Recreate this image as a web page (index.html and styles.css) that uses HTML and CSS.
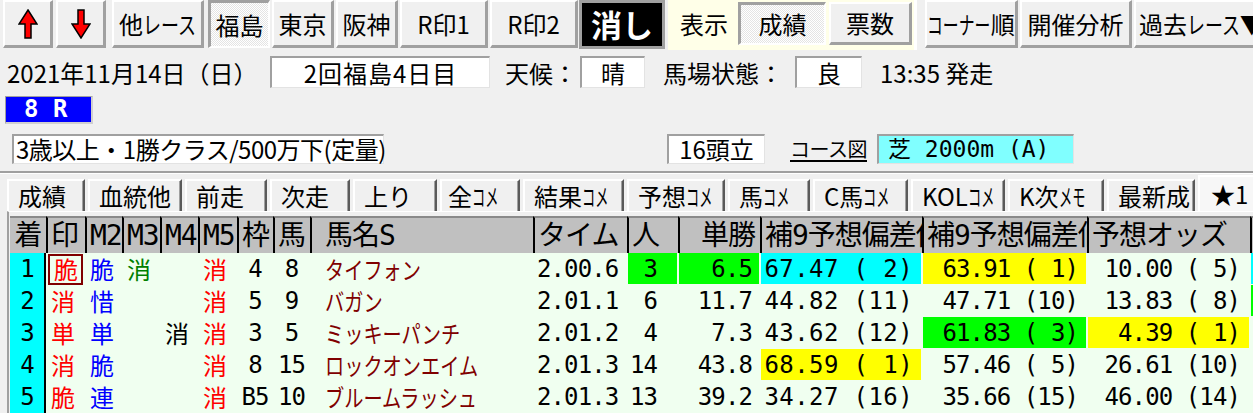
FILE: index.html
```html
<!DOCTYPE html>
<html lang="ja">
<head>
<meta charset="utf-8">
<title>レース成績</title>
<link rel="stylesheet" href="styles.css">
</head>
<body>
<div class="toolbar">
  <button class="btn btn-arrow" aria-label="前のレース">
    <svg width="20" height="30" viewBox="0 0 20 30"><polygon points="10,1 19,15 13,15 13,29 7,29 7,15 1,15" fill="#ff0000" stroke="#000" stroke-width="1.5" stroke-linejoin="miter"/></svg>
  </button>
  <button class="btn btn-arrow" aria-label="次のレース">
    <svg width="20" height="30" viewBox="0 0 20 30"><polygon points="7,1 13,1 13,15 19,15 10,29 1,15 7,15" fill="#ff0000" stroke="#000" stroke-width="1.5" stroke-linejoin="miter"/></svg>
  </button>
  <button class="btn btn-other">他<span class="cond3">レース</span></button>
  <button class="btn btn-venue btn-first pressed">福島</button>
  <button class="btn btn-venue">東京</button>
  <button class="btn btn-venue">阪神</button>
  <button class="btn btn-rmark">R印1</button>
  <button class="btn btn-rmark">R印2</button>
  <button class="btn-erase">消し</button>
  <div class="view-panel">
    <span class="view-label">表示</span>
    <button class="btn btn-view pressed">成績</button>
    <button class="btn btn-view btn-votes">票数</button>
  </div>
  <button class="btn btn-corner"><span class="cond4">コーナー</span>順</button>
  <button class="btn btn-analysis">開催分析</button>
  <button class="btn btn-past">過去<span class="cond3">レース</span>▼</button>
</div>

<div class="info-row">
  <span class="date">2021年11月14日（日）</span>
  <span class="field f-kai">2回福島4日目</span>
  <span class="lbl lbl-weather">天候：</span>
  <span class="field f-weather">晴</span>
  <span class="lbl lbl-baba">馬場状態：</span>
  <span class="field f-baba">良</span>
  <span class="lbl lbl-time">13:35 発走</span>
</div>

<div class="race-row">
  <span class="race-no">8 R</span>
</div>

<div class="cond-row">
  <span class="field f-cond">3歳以上・1勝クラス/500万下(定量)</span>
  <span class="field f-heads">16頭立</span>
  <a class="course-link">コース図</a>
  <span class="field f-course">芝 2000m (A)</span>
</div>

<div class="divider"></div>

<div class="tabs">
  <span class="tab">成績</span>
  <span class="tab">血統他</span>
  <span class="tab">前走</span>
  <span class="tab">次走</span>
  <span class="tab">上り</span>
  <span class="tab">全<span class="cond2">コメ</span></span>
  <span class="tab">結果<span class="cond2">コメ</span></span>
  <span class="tab">予想<span class="cond2">コメ</span></span>
  <span class="tab">馬<span class="cond2">コメ</span></span>
  <span class="tab">C馬<span class="cond2">コメ</span></span>
  <span class="tab">KOL<span class="cond2">コメ</span></span>
  <span class="tab">K次<span class="cond2">メモ</span></span>
  <span class="tab">最新成</span>
  <span class="tab tab-active">★1</span>
</div>

<div class="panel">
<table class="grid">
  <colgroup>
    <col class="k-rank"><col class="k-mark"><col class="k-m2"><col class="k-m3"><col class="k-m4"><col class="k-m5"><col class="k-waku"><col class="k-uma"><col class="k-name"><col class="k-time"><col class="k-pop"><col class="k-win"><col class="k-dev1"><col class="k-dev2"><col class="k-odds"><col class="k-more">
  </colgroup>
  <thead>
    <tr>
      <th class="h-rank">着</th><th>印</th><th>M2</th><th>M3</th><th>M4</th><th>M5</th><th>枠</th><th>馬</th><th class="h-name">馬名S</th><th>タイム</th><th>人</th><th class="h-win">単勝</th><th class="h-clip">補9予想偏差値</th><th class="h-clip">補9予想偏差値</th><th>予想オッズ</th><th></th>
    </tr>
  </thead>
  <tbody>
    <tr>
      <td class="c-rank">1</td>
      <td class="mk"><span class="mark-box red">脆</span></td>
      <td class="mk blue">脆</td>
      <td class="mk green">消</td>
      <td class="mk"></td>
      <td class="mk red">消</td>
      <td class="c-num">4</td>
      <td class="c-num">8</td>
      <td class="c-name"><span class="nm">タイフォン</span></td>
      <td class="c-time">2.00.6</td>
      <td class="c-pop bg-g">3</td>
      <td class="c-win bg-g">6.5</td>
      <td class="c-dev c-dev1 bg-c">67.47 ( 2)</td>
      <td class="c-dev bg-y">63.91 ( 1)</td>
      <td class="c-odds">10.00 ( 5)</td>
      <td class="bg-c"></td>
    </tr>
    <tr>
      <td class="c-rank">2</td>
      <td class="mk red">消</td>
      <td class="mk blue">惜</td>
      <td class="mk"></td>
      <td class="mk"></td>
      <td class="mk red">消</td>
      <td class="c-num">5</td>
      <td class="c-num">9</td>
      <td class="c-name"><span class="nm">バガン</span></td>
      <td class="c-time">2.01.1</td>
      <td class="c-pop">6</td>
      <td class="c-win">11.7</td>
      <td class="c-dev c-dev1">44.82 (11)</td>
      <td class="c-dev">47.71 (10)</td>
      <td class="c-odds">13.83 ( 8)</td>
      <td class="bg-g"></td>
    </tr>
    <tr>
      <td class="c-rank">3</td>
      <td class="mk red">単</td>
      <td class="mk blue">単</td>
      <td class="mk"></td>
      <td class="mk">消</td>
      <td class="mk red">消</td>
      <td class="c-num">3</td>
      <td class="c-num">5</td>
      <td class="c-name"><span class="nm">ミッキーパンチ</span></td>
      <td class="c-time">2.01.2</td>
      <td class="c-pop">4</td>
      <td class="c-win">7.3</td>
      <td class="c-dev c-dev1">43.62 (12)</td>
      <td class="c-dev bg-g">61.83 ( 3)</td>
      <td class="c-odds bg-y">4.39 ( 1)</td>
      <td></td>
    </tr>
    <tr>
      <td class="c-rank">4</td>
      <td class="mk red">消</td>
      <td class="mk blue">脆</td>
      <td class="mk"></td>
      <td class="mk"></td>
      <td class="mk red">消</td>
      <td class="c-num">8</td>
      <td class="c-num">15</td>
      <td class="c-name"><span class="nm">ロックオンエイム</span></td>
      <td class="c-time">2.01.3</td>
      <td class="c-pop">14</td>
      <td class="c-win">43.8</td>
      <td class="c-dev c-dev1 bg-y">68.59 ( 1)</td>
      <td class="c-dev">57.46 ( 5)</td>
      <td class="c-odds">26.61 (10)</td>
      <td></td>
    </tr>
    <tr>
      <td class="c-rank">5</td>
      <td class="mk red">脆</td>
      <td class="mk blue">連</td>
      <td class="mk"></td>
      <td class="mk"></td>
      <td class="mk red">消</td>
      <td class="c-num">B5</td>
      <td class="c-num">10</td>
      <td class="c-name"><span class="nm">ブルームラッシュ</span></td>
      <td class="c-time">2.01.3</td>
      <td class="c-pop">13</td>
      <td class="c-win">39.2</td>
      <td class="c-dev c-dev1">34.27 (16)</td>
      <td class="c-dev">35.66 (15)</td>
      <td class="c-odds">46.00 (14)</td>
      <td></td>
    </tr>
  </tbody>
</table>
</div>
</body>
</html>
```
FILE: styles.css
```css
* { box-sizing: border-box; }
html, body { margin: 0; padding: 0; }
body {
  width: 1253px;
  height: 413px;
  overflow: hidden;
  background: #f0f0f0;
  color: #000;
  font-family: "Noto Sans CJK JP", "Noto Sans", sans-serif;
  font-size: 24px;
}

/* condensed katakana (narrow bitmap-style glyphs) */
.cond2, .cond3, .cond4 {
  display: inline-block;
  transform-origin: left center;
  letter-spacing: 0;
}
.cond2 { transform: scaleX(0.55); margin-right: -21.6px; }
.cond3 { transform: scaleX(0.75); margin-right: -18px; }
.cond4 { transform: scaleX(0.66); margin-right: -32.6px; }

/* ---------- toolbar ---------- */
.toolbar {
  display: flex;
  align-items: flex-start;
  height: 50px;
  white-space: nowrap;
}
.btn {
  flex: none;
  height: 48px;
  margin: 0 0 0 2px;
  padding: 0;
  font: inherit;
  line-height: 1;
  color: #000;
  background: #f0f0f0;
  border-style: solid;
  border-width: 2px 3px 3px 2px;
  border-color: #ffffff #a0a0a0 #a0a0a0 #ffffff;
  display: flex;
  align-items: center;
  justify-content: center;
}
.btn.pressed {
  border-width: 3px 2px 2px 3px;
  border-color: #a0a0a0 #ffffff #ffffff #a0a0a0;
  background: repeating-conic-gradient(#ffffff 0 25%, #e4e4e4 0 50%) 0 0 / 2px 2px;
}
.btn-arrow { width: 50px; margin-left: 3px; }
.btn-other { width: 92px; margin-left: 6px; }
.btn-venue { width: 62px; }
.btn-venue.btn-first { margin-left: 4px; }
.btn-rmark { width: 88px; }
.btn-erase {
  flex: none;
  width: 86px;
  height: 49px;
  margin-left: 1px;
  padding: 0 0 2px;
  background: #000;
  color: #fff;
  border: 3px solid #a0a0a0;
  font-family: inherit;
  font-size: 31px;
  font-weight: 700;
  line-height: 1;
  display: flex;
  align-items: center;
  justify-content: center;
}
.view-panel {
  flex: none;
  display: flex;
  align-items: flex-start;
  width: 249px;
  height: 50px;
  margin-left: 3px;
  padding-top: 2px;
  background: #ffffe8;
  border-right: 3px solid #ffffff;
}
.view-label {
  width: 70px;
  padding-left: 12px;
  line-height: 43px;
}
.btn-view { width: 88px; height: 43px; margin-left: 0; }
.btn-view.btn-votes { width: 83px; margin-left: 3px; }
.btn-corner { width: 93px; margin-left: 8px; }
.btn-analysis { width: 112px; }
.btn-past { width: 130px; justify-content: flex-start; padding-left: 3px; }

/* ---------- info rows ---------- */
.info-row {
  display: flex;
  align-items: center;
  height: 34px;
  margin-top: 5px;
  padding-left: 7px;
  white-space: nowrap;
}
.date { width: 263px; flex: none; }
.field {
  flex: none;
  display: flex;
  align-items: center;
  justify-content: center;
  height: 32px;
  background: #ffffff;
  border-style: solid;
  border-width: 2px 1px 1px 2px;
  border-color: #a0a0a0 #e3e3e3 #e3e3e3 #a0a0a0;
  line-height: 1;
  white-space: nowrap;
}
.f-kai { width: 220px; letter-spacing: 1px; }
.lbl-weather { margin-left: 15px; width: 72px; }
.f-weather { width: 65px; margin-left: 3px; }
.lbl-baba { margin-left: 18px; width: 120px; }
.f-baba { width: 67px; margin-left: 12px; }
.lbl-time { margin-left: 18px; }

.race-row {
  display: flex;
  height: 28px;
  margin-top: 7px;
  padding-left: 5px;
}
.race-no {
  width: 88px;
  height: 28px;
  padding-left: 18px;
  background: #0000ff;
  color: #ffffff;
  font-family: "DejaVu Sans Mono", monospace;
  font-weight: 700;
  font-size: 24px;
  line-height: 24px;
  border-style: solid;
  border-width: 1px 2px 2px 1px;
  border-color: #a0a0a0 #d0d0d0 #d0d0d0 #a0a0a0;
  white-space: pre;
}

.cond-row {
  display: flex;
  align-items: center;
  height: 31px;
  margin-top: 9px;
}
.f-cond {
  width: 372px;
  height: 30px;
  margin-left: 12px;
  justify-content: flex-start;
  padding-left: 2px;
  letter-spacing: -0.5px;
}
.f-heads { width: 98px; height: 30px; margin-left: 283px; }
.course-link {
  flex: none;
  width: 78px;
  margin-left: 25px;
  font-size: 20px;
  letter-spacing: -0.5px;
  color: #000;
  text-decoration: underline;
  text-decoration-thickness: 2px;
  text-underline-offset: 3px;
}
.f-course {
  width: 197px;
  height: 30px;
  margin-left: 9px;
  justify-content: flex-start;
  padding-left: 9px;
  background: #80ffff;
  font-family: "DejaVu Sans Mono", "Noto Sans CJK JP", monospace;
  font-size: 23px;
  white-space: pre;
}

.divider {
  margin-top: 7px;
  height: 3px;
  border-top: 2px solid #a0a0a0;
  border-bottom: 1px solid #ffffff;
}

/* ---------- tabs ---------- */
.tabs {
  display: flex;
  align-items: flex-end;
  gap: 3px;
  height: 37px;
  padding-left: 7px;
  white-space: nowrap;
}
.tab {
  flex: none;
  height: 32px;
  padding-left: 9px;
  border-top: 2px solid #ffffff;
  border-left: 2px solid #ffffff;
  border-right: 2px solid #5a5a5a;
  box-shadow: inset -1px 0 0 #a0a0a0;
  line-height: 29px;
}
.tab:nth-child(1) { width: 78px; }
.tab:nth-child(2) { width: 94px; }
.tab:nth-child(3) { width: 82px; }
.tab:nth-child(4) { width: 80px; }
.tab:nth-child(5) { width: 84px; }
.tab:nth-child(6) { width: 80px; padding-left: 6px; }
.tab:nth-child(7) { width: 101px; }
.tab:nth-child(8) { width: 98px; }
.tab:nth-child(9) { width: 82px; }
.tab:nth-child(10) { width: 95px; }
.tab:nth-child(11) { width: 94px; }
.tab:nth-child(12) { width: 96px; }
.tab:nth-child(13) { width: 88px; }
.tab-active {
  width: 70px;
  height: 36px;
  padding-left: 11px;
  background: #f7f7f7;
  line-height: 33px;
  border-right: none;
  box-shadow: none;
}

/* ---------- table ---------- */
.panel {
  margin-left: 7px;
  padding-top: 4px;
  padding-left: 1px;
  border-top: 1px solid #ffffff;
  border-left: 2px solid #a0a0a0;
}
.grid {
  table-layout: fixed;
  width: 1260px;
  border-collapse: separate;
  border-spacing: 0;
  font-family: "DejaVu Sans Mono", "Noto Sans CJK JP", monospace;
  font-size: 24px;
  letter-spacing: -0.9px;
}
.k-rank { width: 36px; }
.k-mark { width: 39px; }
.k-m2 { width: 37px; }
.k-m3 { width: 38px; }
.k-m4 { width: 38px; }
.k-m5 { width: 39px; }
.k-waku { width: 36px; }
.k-uma { width: 37px; }
.k-name { width: 223px; }
.k-time { width: 94px; }
.k-pop { width: 51px; }
.k-win { width: 82px; }
.k-dev1 { width: 162px; }
.k-dev2 { width: 165px; }
.k-odds { width: 163px; }
.k-more { width: 20px; }

.grid th {
  height: 37px;
  padding: 0 0 0 3px;
  background: #c0c0c0;
  border-top: 2px solid #8a8a8a;
  border-left: 2px solid #000;
  font-weight: normal;
  font-size: 28px;
  letter-spacing: -1px;
  line-height: 33px;
  text-align: left;
  white-space: nowrap;
}
.grid th.h-clip { overflow: hidden; }
.grid th.h-rank { border-left: none; text-align: center; padding-left: 0; }
.grid th.h-name { padding-left: 13px; }
.grid th.h-win { text-align: right; padding-right: 5px; }

.grid td {
  height: 32px;
  padding: 0;
  background: #f0fff0;
  line-height: 30px;
  white-space: pre;
}
.grid td.c-rank {
  background: #00ffff;
  border-right: 2px solid #000;
  text-align: center;
}
.grid td.mk {
  font-family: "Noto Sans CJK JP", sans-serif;
  font-size: 24px;
  letter-spacing: 0;
  padding-left: 5px;
}
.mark-box {
  display: block;
  width: 35px;
  height: 31px;
  margin-left: -3px;
  padding-left: 4px;
  border: 2px solid #800000;
  line-height: 26px;
}
.red { color: #ff0000; }
.blue { color: #0000ff; }
.green { color: #008000; }
.grid td.c-num { text-align: center; }
.grid td.c-name {
  padding-left: 15px;
  color: #800000;
  font-family: "Noto Sans CJK JP", sans-serif;
  letter-spacing: 0;
}
.nm {
  display: inline-block;
  transform: scaleX(0.8);
  transform-origin: left center;
}
.grid td.c-time { padding-left: 4px; }
.grid td.c-pop { text-align: right; padding-right: 21px; }
.grid td.c-win { text-align: right; padding-right: 8px; }
.grid td.c-dev { text-align: right; padding-right: 9px; }
.grid td.c-dev1 { letter-spacing: 0.4px; }
.grid td.c-odds { text-align: right; padding-right: 10px; }

.grid td.bg-g,
.grid td.bg-c,
.grid td.bg-y {
  box-shadow: inset 1px 0 0 #f0fff0, inset -1px 0 0 #f0fff0, inset 0 -1px 0 #f0fff0;
}
.grid td.bg-g { background: #00ff00; }
.grid td.bg-c { background: #00ffff; }
.grid td.bg-y { background: #ffff00; }
```
